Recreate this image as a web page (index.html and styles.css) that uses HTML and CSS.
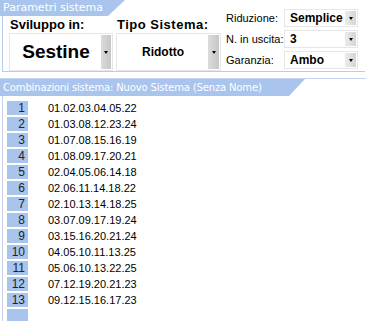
FILE: index.html
```html
<!DOCTYPE html>
<html>
<head>
<meta charset="utf-8">
<link rel="stylesheet" href="styles.css">
</head>
<body>
<div class="params">
  <div class="tab tab1">Parametri sistema</div>
  <div class="params-body">
    <div class="group g1">
      <div class="glabel">Sviluppo in:</div>
      <div class="select big"><span class="val">Sestine</span><span class="btn"><i class="arrow"></i></span></div>
    </div>
    <div class="group g2">
      <div class="glabel">Tipo Sistema:</div>
      <div class="select mid"><span class="val">Ridotto</span><span class="btn"><i class="arrow"></i></span></div>
    </div>
    <div class="opts">
      <span class="olabel">Riduzione:</span>
      <div class="select small"><span class="val">Semplice</span><span class="btn"><i class="arrow"></i></span></div>
      <span class="olabel">N. in uscita:</span>
      <div class="select small"><span class="val">3</span><span class="btn"><i class="arrow"></i></span></div>
      <span class="olabel">Garanzia:</span>
      <div class="select small"><span class="val">Ambo</span><span class="btn"><i class="arrow"></i></span></div>
    </div>
  </div>
</div>
<div class="combos">
  <div class="tab tab2">Combinazioni sistema: Nuovo Sistema (Senza Nome)</div>
  <div class="list">
    <div class="row"><span class="num">1</span><span class="combo">01.02.03.04.05.22</span></div>
    <div class="row"><span class="num">2</span><span class="combo">01.03.08.12.23.24</span></div>
    <div class="row"><span class="num">3</span><span class="combo">01.07.08.15.16.19</span></div>
    <div class="row"><span class="num">4</span><span class="combo">01.08.09.17.20.21</span></div>
    <div class="row"><span class="num">5</span><span class="combo">02.04.05.06.14.18</span></div>
    <div class="row"><span class="num">6</span><span class="combo">02.06.11.14.18.22</span></div>
    <div class="row"><span class="num">7</span><span class="combo">02.10.13.14.18.25</span></div>
    <div class="row"><span class="num">8</span><span class="combo">03.07.09.17.19.24</span></div>
    <div class="row"><span class="num">9</span><span class="combo">03.15.16.20.21.24</span></div>
    <div class="row"><span class="num">10</span><span class="combo">04.05.10.11.13.25</span></div>
    <div class="row"><span class="num">11</span><span class="combo">05.06.10.13.22.25</span></div>
    <div class="row"><span class="num">12</span><span class="combo">07.12.19.20.21.23</span></div>
    <div class="row"><span class="num">13</span><span class="combo">09.12.15.16.17.23</span></div>
    <div class="row"><span class="num"></span><span class="combo"></span></div>
  </div>
</div>
</body>
</html>
```
FILE: styles.css
```css
html, body {
  margin: 0;
  padding: 0;
  background: #ffffff;
  width: 366px;
  height: 322px;
  overflow: hidden;
  font-family: "Liberation Sans", Arial, sans-serif;
  color: #000;
}

.tab {
  box-sizing: border-box;
  height: 17px;
  line-height: 17px;
  padding-left: 3px;
  background: #a9c5ee;
  color: #ffffff;
  font-family: "DejaVu Sans", Verdana, sans-serif;
  white-space: nowrap;
}

.tab1 {
  width: 125px;
  height: 16px;
  line-height: 16px;
  font-size: 11px;
  clip-path: polygon(0 0, 100% 0, calc(100% - 17px) 100%, 0 100%);
}

.tab2 {
  width: 305px;
  font-size: 10px;
  letter-spacing: -0.15px;
  clip-path: polygon(0 0, 100% 0, calc(100% - 16px) 100%, 0 100%);
}

.params-body {
  margin-left: 2px;
  width: 356px;
  height: 55px;
  border-left: 1px solid #b7cdf0;
  border-bottom: 1px solid #b7cdf0;
  display: flex;
  padding-left: 6px;
  box-sizing: content-box;
}

.group {
  display: flex;
  flex-direction: column;
}

.g1 { width: 104px; }
.g2 { width: 105px; margin-left: 3px; }

.glabel {
  height: 17px;
  line-height: 17px;
  font-size: 13px;
  font-weight: bold;
  padding-left: 1px;
  white-space: nowrap;
}

.g2 .glabel { letter-spacing: 0.5px; }

.select {
  box-sizing: border-box;
  display: flex;
  border: 1px solid #e6e6e6;
  padding: 1px;
  background: #fff;
}

.select .val {
  flex: 1;
  display: flex;
  align-items: center;
  justify-content: center;
  font-weight: bold;
  white-space: nowrap;
}

.btn {
  display: flex;
  align-items: center;
  justify-content: center;
  background: linear-gradient(to right, #dcdcdc, #c6c6c6);
}

.arrow {
  width: 0;
  height: 0;
  border-left: 2px solid transparent;
  border-right: 2px solid transparent;
  border-top: 3px solid #000;
}

.big { height: 38px; }
.big .val { font-size: 19px; }
.big .btn { width: 10px; }

.mid { height: 38px; }
.mid .val { font-size: 12px; }
.mid .btn { width: 11px; }

.opts {
  margin-top: -7px;
  margin-left: 4px;
  display: grid;
  grid-template-columns: 59px 74px;
  grid-auto-rows: 18px;
  row-gap: 3px;
  align-items: center;
}

.olabel {
  font-size: 11px;
  padding-left: 1px;
  white-space: nowrap;
}

.small { height: 18px; }
.small .val {
  justify-content: flex-start;
  padding-left: 4px;
  font-size: 12px;
}
.small .btn {
  width: 11px;
  background: linear-gradient(to right, #ececec, #d4d4d4);
}

.combos {
  margin-top: 6px;
  border-top: 1px solid #c3d6f2;
}

.list {
  margin-left: 2px;
  border-left: 1px solid #c3d3ec;
  padding-top: 4px;
  padding-left: 4px;
  height: 221px;
  overflow: hidden;
}

.row {
  height: 16px;
  display: flex;
  align-items: center;
}

.num {
  box-sizing: border-box;
  width: 21px;
  height: 14px;
  line-height: 14px;
  background: #a9c5ee;
  text-align: right;
  padding-right: 3px;
  font-size: 12px;
  color: #222;
}

.combo {
  margin-left: 20px;
  font-size: 11px;
  line-height: 14px;
}
```
